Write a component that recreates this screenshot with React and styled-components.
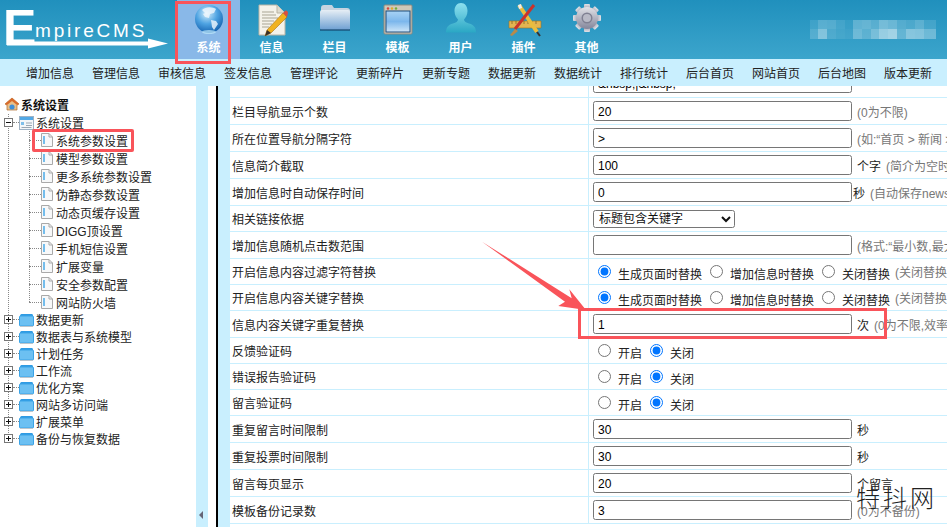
import React from 'react'
import styled, { createGlobalStyle } from 'styled-components'

const RED = '#f9545a'
const CJK = '"Liberation Sans", "Noto Sans CJK SC", sans-serif'

const GlobalStyle = createGlobalStyle`
  html, body {
    margin: 0;
    padding: 0;
    height: 100%;
    overflow: hidden;
    background: #fff;
    font-family: ${CJK};
    font-size: 12px;
    color: #1c1c1c;
  }
`

const Page = styled.div`
  position: relative;
  width: 947px;
  height: 527px;
  overflow: hidden;
  display: flex;
  flex-direction: column;
`

const Header = styled.header`
  height: 59px;
  flex: none;
  display: flex;
  background: linear-gradient(#2090bd, #3ca5cc);
`

const Logo = styled.div`
  position: relative;
  width: 177px;
  flex: none;
`

const LogoE = styled.span`
  position: absolute;
  left: 3px;
  top: 3px;
  font: 700 50px/50px "Liberation Sans", sans-serif;
  color: #fff;
`

const LogoText = styled.span`
  position: absolute;
  left: 35px;
  top: 21px;
  font: 400 19px/20px "Liberation Sans", sans-serif;
  letter-spacing: 2.8px;
  color: #fff;
`

const Tabs = styled.nav`
  display: flex;
`

const Tab = styled.div`
  width: 63px;
  height: 59px;
  flex: none;
  display: flex;
  flex-direction: column;
  align-items: center;
  padding-top: 2px;
  box-sizing: border-box;
  background: ${p => (p.$active ? '#89b8e8' : 'transparent')};
  color: #fff;
  font-weight: 700;
  font-size: 12px;
  svg {
    width: 36px;
    height: 36px;
    flex: none;
  }
`

const TabLabel = styled.span`
  margin-top: 2px;
  line-height: 17px;
`

const UserBlur = styled.svg`
  position: absolute;
  left: 810px;
  top: 20px;
  width: 126px;
  height: 19px;
`

const SubNav = styled.nav`
  height: 27px;
  flex: none;
  display: flex;
  align-items: center;
  padding-left: 17px;
  background: #c9effe;
`

const SubItem = styled.a`
  width: 66px;
  flex: none;
  text-align: center;
  white-space: nowrap;
  color: #222;
  font-size: 12px;
`

const Body = styled.div`
  flex: 1;
  min-height: 0;
  display: flex;
`

const Sidebar = styled.aside`
  width: 196px;
  flex: none;
  box-sizing: border-box;
  padding-top: 9px;
`

const SideTitle = styled.div`
  display: flex;
  align-items: center;
  gap: 1px;
  height: 18px;
  padding-left: 4px;
  font-weight: 700;
  color: #111;
  svg {
    width: 16px;
    height: 16px;
  }
`

const Tree = styled.div`
  margin-top: 1px;
  background:
    linear-gradient(#fff, #fff) 0 100% / 100% 8px no-repeat,
    repeating-linear-gradient(#888 0 1px, transparent 1px 2px) 8px 0 / 1px 100% no-repeat;
`

const Root = styled.div`
  display: flex;
  align-items: center;
  height: 17px;
  padding-left: 4px;
  white-space: nowrap;
  color: #222;
  svg {
    flex: none;
  }
`

const Expander = styled.span`
  position: relative;
  flex: none;
  width: 7px;
  height: 7px;
  border: 1px solid #777;
  background: #fff;
  &::before {
    content: '';
    position: absolute;
    left: 1px;
    right: 1px;
    top: 3px;
    height: 1px;
    background: #111;
  }
  &::after {
    content: '';
    display: ${p => (p.$open ? 'none' : 'block')};
    position: absolute;
    top: 1px;
    bottom: 1px;
    left: 3px;
    width: 1px;
    background: #111;
  }
`

const Dots = styled.span`
  flex: none;
  width: ${p => p.$w}px;
  height: 0;
  border-top: 1px dotted #888;
`

const RootLabel = styled.span`
  margin-left: 2px;
`

const LeafGroup = styled.div`
  margin-left: 29px;
  background: repeating-linear-gradient(#888 0 1px, transparent 1px 2px) 0 0 / 1px 100% no-repeat;
`

const Leaf = styled.div`
  display: flex;
  align-items: center;
  height: 18px;
  white-space: nowrap;
  color: #222;
  background: ${p => (p.$last ? 'linear-gradient(#fff, #fff) 0 100% / 1px 8px no-repeat' : 'none')};
  svg {
    flex: none;
  }
`

const LeafLabel = styled.span`
  margin-left: 3px;
`

const Highlight = styled.div`
  position: absolute;
  left: 32px;
  top: 129px;
  width: 96px;
  height: 17px;
  border: 3px solid ${RED};
  border-radius: 2px;
`

const Splitter = styled.div`
  width: 12px;
  flex: none;
  background: #c9effe;
  display: flex;
  align-items: flex-end;
  justify-content: center;
  padding-bottom: 8px;
  box-sizing: border-box;
`

const SplitArrow = styled.span`
  width: 0;
  height: 0;
  border-style: solid;
  border-width: 4px 4px 4px 0;
  border-color: transparent #667 transparent transparent;
  margin-left: -2px;
`

const Content = styled.main`
  flex: 1;
  min-width: 0;
  overflow: hidden;
  margin-left: 8px;
  border-left: 2px solid #000;
  display: flex;
`

const Gutter = styled.div`
  width: 12px;
  flex: none;
  background: #c9effe;
`

const Table = styled.div`
  flex: 1;
  min-width: 0;
  overflow: hidden;
`

const Row = styled.div`
  display: grid;
  grid-template-columns: 359px 1fr;
  height: ${p => p.$h}px;
  box-sizing: border-box;
  border-bottom: 1px solid #c9effe;
`

const LabelCell = styled.div`
  display: flex;
  align-items: center;
  padding-left: 2px;
  border-right: 1px solid #c9effe;
  white-space: nowrap;
  color: #222;
`

const ValueCell = styled.div`
  display: flex;
  align-items: ${p => (p.$clip ? 'flex-end' : 'center')};
  padding-left: 4px;
  overflow: hidden;
  white-space: nowrap;
`

const TextInput = styled.input`
  flex: none;
  width: 259px;
  height: 20px;
  box-sizing: border-box;
  padding: 1px 4px 0;
  margin-bottom: ${p => (p.$clip ? '4px' : '0')};
  border: 1px solid #767676;
  border-radius: 2.5px;
  font: 12px "Liberation Sans", sans-serif;
  color: #000;
  background: #fff;
  outline: none;
`

const Select = styled.select`
  width: 142px;
  height: 18px;
  box-sizing: border-box;
  padding-left: 1px;
  border: 1px solid #767676;
  border-radius: 2.5px;
  font: 12px ${CJK};
  color: #111;
  background: #fff;
`

const Unit = styled.span`
  margin-left: ${p => (p.$tight ? '1px' : '5px')};
  color: #222;
`

const Hint = styled.span`
  color: #777;
  margin-left: 5px;
`

const RadioWrap = styled.label`
  display: inline-flex;
  align-items: center;
  margin-left: ${p => (p.$first ? '3px' : '6px')};
  color: #222;
  input {
    width: 13px;
    height: 13px;
    margin: 0 7px 0 2px;
    accent-color: #0075ff;
  }
`

const RadioText = styled.span`
  padding-top: 3px;
`

const CallBox = styled.div`
  position: absolute;
  left: 578px;
  top: 308px;
  width: 309px;
  height: 31px;
  box-sizing: border-box;
  border: 3px solid ${RED};
`

const CallArrow = styled.svg`
  position: absolute;
  left: 478px;
  top: 236px;
  width: 120px;
  height: 90px;
`

const TabBox = styled.div`
  position: absolute;
  left: 175px;
  top: 1px;
  width: 56px;
  height: 63px;
  box-sizing: border-box;
  border: 3px solid ${RED};
`

const Watermark = styled.div`
  position: absolute;
  left: 856px;
  top: 483px;
  font: 300 24px/28px "Noto Sans CJK SC", sans-serif;
  letter-spacing: 3px;
  color: #222;
  white-space: nowrap;
`

const Globe = () => (
  <svg viewBox="0 0 36 36">
    <defs>
      <radialGradient id="gl" cx="0.42" cy="0.3" r="0.75">
        <stop offset="0" stopColor="#d5effc" />
        <stop offset="0.5" stopColor="#4ea3e2" />
        <stop offset="1" stopColor="#0f5cab" />
      </radialGradient>
    </defs>
    <circle cx="18" cy="17" r="14" fill="url(#gl)" />
    <path d="M11 8c4-4 11-3 14-1l-2 4-4 1-1 4-4-1-2-3 2-1zM20 18l5 1 2 3-4 6-2-3z" fill="#f1f8fd" opacity="0.8" />
    <ellipse cx="18" cy="30" rx="7" ry="2" fill="#bfe8fb" opacity="0.7" />
  </svg>
)

const Note = () => (
  <svg viewBox="0 0 36 36">
    <path d="M5 3h18l8 8v22H5z" fill="#f4f2ea" stroke="#b9b5a5" />
    <path d="M23 3v8h8" fill="#dedbcf" stroke="#b9b5a5" />
    <path d="M8 10h12M8 13h14M8 16h16M8 19h12M8 22h10M8 25h7" stroke="#a9a594" strokeWidth="1" />
    <path d="M11 34l2-6L29 11l4 4-16 16z" fill="#f0b21f" stroke="#a4701a" strokeWidth="0.6" />
    <path d="M11 34l2-6 4 3z" fill="#3a3026" />
    <path d="M29 11l2-2c1-1 3 0 3 2l-1 4z" fill="#d9503f" />
  </svg>
)

const Folder = () => (
  <svg viewBox="0 0 36 36">
    <defs>
      <linearGradient id="fo" x1="0" x2="0" y1="0" y2="1">
        <stop offset="0" stopColor="#e6eef5" />
        <stop offset="1" stopColor="#6d9fd2" />
      </linearGradient>
    </defs>
    <path d="M4 6c0-2 1-3 3-3h8l2 3h13c2 0 3 1 3 3v16c0 2-1 3-3 3H7c-2 0-3-1-3-3z" fill="#c5d3e0" />
    <rect x="3" y="8" width="30" height="20" rx="2" fill="url(#fo)" />
    <path d="M3 28h30" stroke="#14466f" strokeWidth="1.2" />
  </svg>
)

const WindowIcon = () => (
  <svg viewBox="0 0 36 36">
    <defs>
      <linearGradient id="wi" x1="0" x2="0" y1="0" y2="1">
        <stop offset="0" stopColor="#a9d3f5" />
        <stop offset="0.5" stopColor="#7cb7ec" />
        <stop offset="1" stopColor="#cfe6f8" />
      </linearGradient>
    </defs>
    <rect x="4" y="3" width="28" height="29" rx="1" fill="#cfc8b8" stroke="#8e8a80" />
    <circle cx="8" cy="6.5" r="1.2" fill="#d8443a" />
    <circle cx="12" cy="6.5" r="1.2" fill="#e0a92c" />
    <circle cx="16" cy="6.5" r="1.2" fill="#6fae3b" />
    <rect x="6" y="9" width="24" height="21" fill="url(#wi)" stroke="#1d4c7c" />
  </svg>
)

const User = () => (
  <svg viewBox="0 0 36 36">
    <defs>
      <linearGradient id="us" x1="0" x2="0" y1="0" y2="1">
        <stop offset="0" stopColor="#8de0ef" />
        <stop offset="1" stopColor="#2aa7c4" />
      </linearGradient>
    </defs>
    <path d="M18 1c4 0 6.500 3.500 6.500 8 0 4-2 7-3.500 8.500 0 2 2 3 5 4 5 1.500 7 4 7 9H3c0-5 2-7.500 7-9 3-1 5-2 5-4C13.500 16 11.500 13 11.500 9c0-4.500 2.500-8 6.500-8z" fill="url(#us)" />
  </svg>
)

const Tools = () => (
  <svg viewBox="0 0 36 36">
    <path d="M3 19h32v7H3z" fill="#e3b552" stroke="#9a7424" strokeWidth="0.6" />
    <path d="M6 19v3M10 19v3M14 19v3M18 19v3M22 19v3M26 19v3M30 19v3" stroke="#7a5a1a" strokeWidth="0.7" />
    <path d="M13 3l18 27" stroke="#e9bd3e" strokeWidth="4" />
    <path d="M31 30l3 4" stroke="#333" strokeWidth="2" />
    <path d="M28 3L9 27" stroke="#c9332b" strokeWidth="3" />
    <path d="M9 27l-5 6 2 1 6-5z" fill="#b98a4a" />
    <path d="M12 3l3-1 1 4-3 1z" fill="#eee" />
  </svg>
)

const Gear = () => (
  <svg viewBox="0 0 36 36">
    <defs>
      <linearGradient id="ge" x1="0" x2="0" y1="0" y2="1">
        <stop offset="0" stopColor="#e2e3e8" />
        <stop offset="1" stopColor="#83859a" />
      </linearGradient>
    </defs>
    <g fill="url(#ge)">
      {[0, 45, 90, 135, 180, 225, 270, 315].map(r => (
        <rect key={r} x="15" y="2" width="6" height="7" rx="1" transform={`rotate(${r} 18 16)`} />
      ))}
      <circle cx="18" cy="16" r="11" />
    </g>
    <circle cx="18" cy="16" r="5.5" fill="#7f8092" />
    <circle cx="18" cy="16" r="4" fill="#b9bac6" />
  </svg>
)

const tabs = [
  { label: '系统', Icon: Globe, active: true },
  { label: '信息', Icon: Note },
  { label: '栏目', Icon: Folder },
  { label: '模板', Icon: WindowIcon },
  { label: '用户', Icon: User },
  { label: '插件', Icon: Tools },
  { label: '其他', Icon: Gear },
]

const subNav = ['增加信息', '管理信息', '审核信息', '签发信息', '管理评论', '更新碎片', '更新专题', '数据更新', '数据统计', '排行统计', '后台首页', '网站首页', '后台地图', '版本更新']

const leaves = ['系统参数设置', '模型参数设置', '更多系统参数设置', '伪静态参数设置', '动态页缓存设置', 'DIGG顶设置', '手机短信设置', '扩展变量', '安全参数配置', '网站防火墙']
const roots = ['数据更新', '数据表与系统模型', '计划任务', '工作流', '优化方案', '网站多访问端', '扩展菜单', '备份与恢复数据']

const blurCells = [
  [0, 0, 8, 9, 0.1], [8, 0, 9, 9, 0.22], [17, 0, 9, 9, 0.2], [26, 0, 9, 9, 0.12], [35, 0, 8, 9, 0.06],
  [43, 0, 9, 9, 0.25], [52, 0, 9, 9, 0.28], [61, 0, 8, 9, 0.22], [69, 0, 9, 9, 0.35], [78, 0, 9, 9, 0.3],
  [87, 0, 9, 9, 0.2], [96, 0, 9, 9, 0.16], [105, 0, 9, 9, 0.24], [114, 0, 12, 9, 0.12],
  [0, 9, 8, 10, 0.18], [8, 9, 9, 10, 0.4], [17, 9, 9, 10, 0.15], [26, 9, 9, 10, 0.1], [35, 9, 8, 10, 0.08],
  [43, 9, 9, 10, 0.3], [52, 9, 9, 10, 0.22], [61, 9, 8, 10, 0.35], [69, 9, 9, 10, 0.5], [78, 9, 9, 10, 0.55],
  [87, 9, 9, 10, 0.25], [96, 9, 9, 10, 0.42], [105, 9, 9, 10, 0.4], [114, 9, 12, 10, 0.3],
]

const HomeIcon = () => (
  <svg viewBox="0 0 16 16">
    <path d="M1 8l7-6 7 6-2 1v5H3V9z" fill="#e9c08a" stroke="#b06a2c" strokeWidth="0.7" />
    <path d="M1 8l7-6 7 6-2 1-5-4-5 4z" fill="#d96a2b" />
    <circle cx="8" cy="11" r="2.6" fill="#3f8fd8" />
  </svg>
)

const SettingIcon = () => (
  <svg width="15" height="14" viewBox="0 0 15 14">
    <rect x="0.5" y="0.5" width="14" height="13" fill="#f3f6f9" stroke="#9fb2c4" />
    <rect x="1" y="1" width="13" height="3" fill="#52a9e6" />
    <rect x="2" y="6" width="3" height="3" fill="#7fbfea" />
    <path d="M7 7h6M7 9.500h6M2.500 11.500h10" stroke="#9aa7b3" />
  </svg>
)

const FolderIcon = () => (
  <svg width="15" height="14" viewBox="0 0 15 14">
    <path d="M1 3c0-1 .5-2 1.500-2h10c1 0 1.500 .6 1.500 1.500V4H1z" fill="#2f9be3" />
    <rect x="0.5" y="3" width="14" height="10" rx="1" fill="#6cc0f2" stroke="#3ba3e6" />
    <path d="M1 13.500h13" stroke="#bcc5cc" />
  </svg>
)

const PageIcon = () => (
  <svg width="12" height="14" viewBox="0 0 12 14">
    <path d="M.5 .5h7.500l3.500 3.500v9.500H.5z" fill="#f7f8f9" stroke="#a9a9a9" />
    <path d="M8 .5V4h3.500" fill="none" stroke="#a9a9a9" />
    <rect x="2" y="3" width="2" height="8" fill="#74bdec" />
  </svg>
)

const rows = [
  { h: 12, clip: true, label: '栏目导航分隔字符', value: '&nbsp;|&nbsp;' },
  { h: 27, label: '栏目导航显示个数', value: '20', hint: '(0为不限)' },
  { h: 27, label: '所在位置导航分隔字符', value: '>', hint: '(如:“首页 > 新闻 > 体育”)' },
  { h: 27, label: '信息简介截取', value: '100', unit: '个字', hint: '(简介为空时截取)' },
  { h: 27, label: '增加信息时自动保存时间', value: '0', unit: '秒', tight: true, hint: '(自动保存news)' },
  { h: 26, label: '相关链接依据', select: '标题包含关键字' },
  { h: 27, label: '增加信息随机点击数范围', value: '', hint: '(格式:“最小数,最大数”)' },
  { h: 26, label: '开启信息内容过滤字符替换', radios: ['生成页面时替换', '增加信息时替换', '关闭替换'], on: 0, hint: '(关闭替换内容)' },
  { h: 26, label: '开启信息内容关键字替换', radios: ['生成页面时替换', '增加信息时替换', '关闭替换'], on: 0, hint: '(关闭替换内容)' },
  { h: 27, label: '信息内容关键字重复替换', value: '1', unit: '次', hint: '(0为不限,效率低)' },
  { h: 26, label: '反馈验证码', radios: ['开启', '关闭'], on: 1 },
  { h: 26, label: '错误报告验证码', radios: ['开启', '关闭'], on: 1 },
  { h: 26, label: '留言验证码', radios: ['开启', '关闭'], on: 1 },
  { h: 27, label: '重复留言时间限制', value: '30', unit: '秒' },
  { h: 27, label: '重复投票时间限制', value: '30', unit: '秒' },
  { h: 27, label: '留言每页显示', value: '20', unit: '个留言' },
  { h: 27, label: '模板备份记录数', value: '3', hint: '(0为不备份)' },
]

const App = () => (
  <Page>
    <GlobalStyle />
    <Header>
      <Logo>
        <LogoE>E</LogoE>
        <LogoText>mpireCMS</LogoText>
        <svg width="177" height="59" viewBox="0 0 177 59">
          <path d="M7 41.500h141v-3l20 5-20 5v-3H7z" fill="#fff" />
        </svg>
      </Logo>
      <Tabs>
        {tabs.map(({ label, Icon, active }) => (
          <Tab key={label} $active={active}>
            <Icon />
            <TabLabel>{label}</TabLabel>
          </Tab>
        ))}
      </Tabs>
      <UserBlur viewBox="0 0 126 19">
        {blurCells.map(([x, y, w, h, o]) => (
          <rect key={`${x}-${y}`} x={x} y={y} width={w} height={h} fill="#fff" opacity={o} />
        ))}
      </UserBlur>
    </Header>
    <SubNav>
      {subNav.map(item => <SubItem key={item}>{item}</SubItem>)}
    </SubNav>
    <Body>
      <Sidebar>
        <SideTitle><HomeIcon />系统设置</SideTitle>
        <Tree>
          <Root>
            <Expander $open />
            <Dots $w={6} />
            <SettingIcon />
            <RootLabel>系统设置</RootLabel>
          </Root>
          <LeafGroup>
            {leaves.map((leaf, i) => (
              <Leaf key={leaf} $last={i === leaves.length - 1}>
                <Dots $w={12} />
                <PageIcon />
                <LeafLabel>{leaf}</LeafLabel>
              </Leaf>
            ))}
          </LeafGroup>
          {roots.map(root => (
            <Root key={root}>
              <Expander />
              <Dots $w={6} />
              <FolderIcon />
              <RootLabel>{root}</RootLabel>
            </Root>
          ))}
        </Tree>
      </Sidebar>
      <Splitter><SplitArrow /></Splitter>
      <Content>
        <Gutter />
        <Table>
          {rows.map(r => (
            <Row key={r.label} $h={r.h}>
              <LabelCell>{r.clip ? '' : r.label}</LabelCell>
              <ValueCell $clip={r.clip}>
                {r.value !== undefined && <TextInput readOnly $clip={r.clip} value={r.value} />}
                {r.select && (
                  <Select defaultValue={r.select}>
                    <option>{r.select}</option>
                  </Select>
                )}
                {r.radios && r.radios.map((text, i) => (
                  <RadioWrap key={text} $first={i === 0}>
                    <input type="radio" readOnly checked={i === r.on} />
                    <RadioText>{text}</RadioText>
                  </RadioWrap>
                ))}
                {r.unit && <Unit $tight={r.tight}>{r.unit}</Unit>}
                {r.hint && <Hint>{r.hint}</Hint>}
              </ValueCell>
            </Row>
          ))}
        </Table>
      </Content>
    </Body>

    <TabBox />
    <Highlight />
    <CallBox />
    <CallArrow viewBox="0 0 120 90">
      <path d="M4 5.700L93.700 62.300 91.300 53.300 108 74 80.300 70 87 65.700z" fill={RED} />
    </CallArrow>
    <Watermark>特抖网</Watermark>
  </Page>
)

export default App
